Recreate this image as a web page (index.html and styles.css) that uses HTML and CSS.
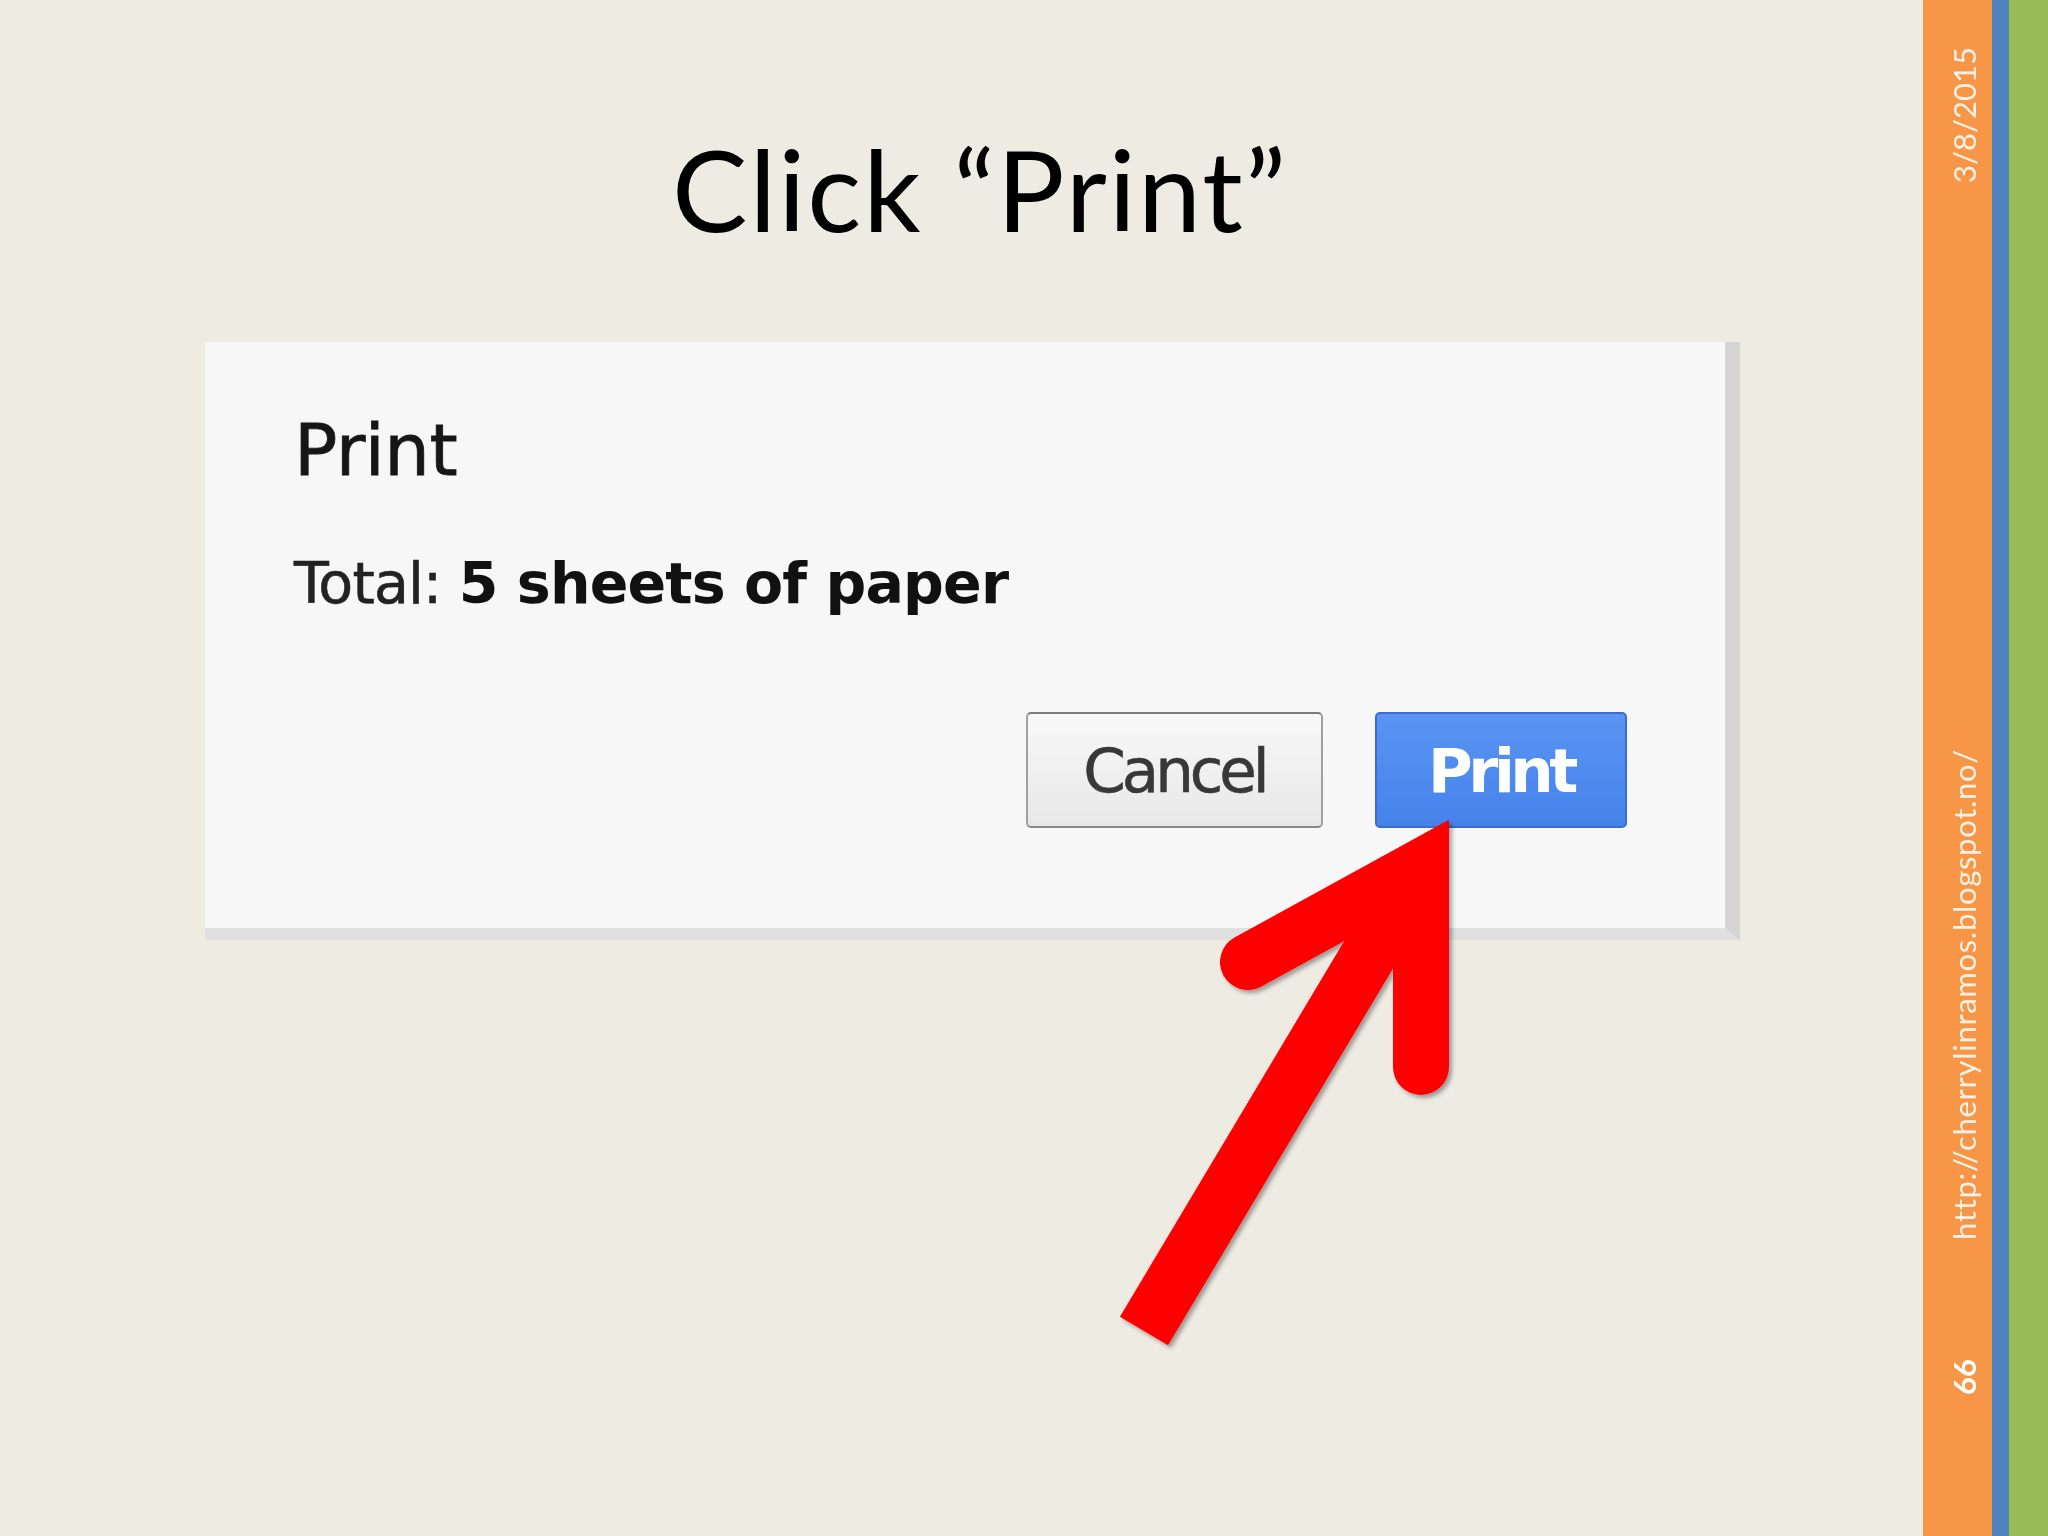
FILE: index.html
```html
<!DOCTYPE html>
<html lang="en">
<head>
<meta charset="utf-8">
<title>Click “Print”</title>
<link rel="stylesheet" href="styles.css">
</head>
<body>
<div class="slide">
  <main class="content">
    <h1 class="title">Click “Print”</h1>
    <section class="dialog">
      <h2 class="dlg-title">Print</h2>
      <p class="dlg-total">Total: <b>5 sheets of paper</b></p>
      <div class="dlg-actions">
        <button class="btn btn-cancel">Cancel</button>
        <button class="btn btn-print">Print</button>
      </div>
    </section>
  </main>
  <aside class="sidebar">
    <div class="bar-orange">
      <div class="slot slot-date"><span class="vtext">3/8/2015</span></div>
      <div class="slot slot-url"><span class="vtext url">http://cherrylinramos.blogspot.no/</span></div>
      <div class="slot slot-num"><span class="vtext num">66</span></div>
    </div>
    <div class="bar-blue"></div>
    <div class="bar-green"></div>
  </aside>
  <svg class="arrow" viewBox="0 0 2048 1536" width="2048" height="1536" aria-hidden="true">
    <defs>
      <filter id="arrow-shadow" x="-20%" y="-20%" width="140%" height="140%">
        <feDropShadow dx="3" dy="3" stdDeviation="2" flood-color="#000" flood-opacity="0.35"/>
      </filter>
    </defs>
    <g filter="url(#arrow-shadow)" stroke="#ff0000" stroke-width="56" fill="none">
      <path d="M1144 1331 L1421 867" stroke-linecap="butt"/>
      <path d="M1248 962 L1421 867 L1421 1067" stroke-linecap="round" stroke-linejoin="miter"/>
    </g>
  </svg>
</div>
</body>
</html>
```

FILE: styles.css
```css
html, body {
  margin: 0;
  padding: 0;
  background: #eeece3;
}

.slide {
  position: relative;
  width: 2048px;
  height: 1536px;
  display: flex;
  overflow: hidden;
  background: #eeebe3;
}

.content {
  flex: 1;
  padding-top: 132px;
}

.title {
  margin: 0 0 0 205px;
  width: 1550px;
  text-align: center;
  font-family: Lato, "Open Sans", sans-serif;
  font-weight: 400;
  font-size: 113px;
  line-height: 112px;
  letter-spacing: 2px;
  color: #000;
}

.dialog {
  box-sizing: border-box;
  margin: 98px 0 0 205px;
  width: 1535px;
  height: 598px;
  padding: 72px 98px 0 89px;
  background: #f7f7f8;
  border-right: 15px solid #d5d5d5;
  border-bottom: 12px solid #e0e0e0;
  font-family: "DejaVu Sans", sans-serif;
}

.dlg-title {
  margin: 0;
  font-size: 72px;
  line-height: 72px;
  font-weight: 400;
  letter-spacing: -0.5px;
  color: #161616;
  -webkit-text-stroke: 0.8px #161616;
}

.dlg-total {
  margin: 69px 0 0;
  font-size: 57px;
  line-height: 57px;
  letter-spacing: -0.8px;
  color: #222;
  -webkit-text-stroke: 0.6px #222;
}

.dlg-total b {
  font-weight: 700;
  color: #111;
  -webkit-text-stroke: 0;
}

.dlg-actions {
  display: flex;
  justify-content: flex-end;
  gap: 52px;
  margin-top: 100px;
}

.btn {
  box-sizing: border-box;
  height: 116px;
  display: flex;
  align-items: center;
  justify-content: center;
  padding: 0;
  border-radius: 5px;
  font-family: "DejaVu Sans", sans-serif;
  font-size: 61px;
  line-height: 61px;
}

.btn-cancel {
  width: 297px;
  background: linear-gradient(#f8f8f8, #e8e8e8);
  border: 2px solid #a0a0a0;
  border-top-color: #7d7d7d;
  border-bottom-color: #8a8a8a;
  color: #383838;
  letter-spacing: -4px;
  -webkit-text-stroke: 0.6px #383838;
}

.btn-print {
  width: 252px;
  background: linear-gradient(#5a95f3, #4582ea);
  border: 2px solid #3a6dcf;
  color: #fff;
  font-weight: 700;
  letter-spacing: -4.5px;
}

.sidebar {
  display: flex;
  width: 125px;
}

.bar-orange {
  width: 69px;
  box-sizing: border-box;
  padding-left: 12px;
  background: #f79646;
  display: flex;
  flex-direction: column;
  align-items: center;
}

.bar-blue {
  width: 17px;
  background: #4f81bd;
}

.bar-green {
  width: 39px;
  background: #9bbb59;
}

.slot {
  display: flex;
  flex-direction: column;
  align-items: center;
  justify-content: center;
}

.slot-date {
  margin-top: 50px;
  height: 130px;
}

.slot-url {
  margin-top: 571px;
  height: 486px;
}

.slot-num {
  margin-top: 121px;
  height: 37px;
}

.vtext {
  display: block;
  writing-mode: vertical-rl;
  transform: rotate(180deg);
  white-space: nowrap;
  font-family: Lato, "Open Sans", sans-serif;
  font-size: 31px;
  line-height: 34px;
  color: #fdf1e6;
}

.vtext.url {
  letter-spacing: 0.7px;
}

.vtext.num {
  font-weight: 700;
  color: #fff;
}

.arrow {
  position: absolute;
  left: 0;
  top: 0;
  pointer-events: none;
}
```
